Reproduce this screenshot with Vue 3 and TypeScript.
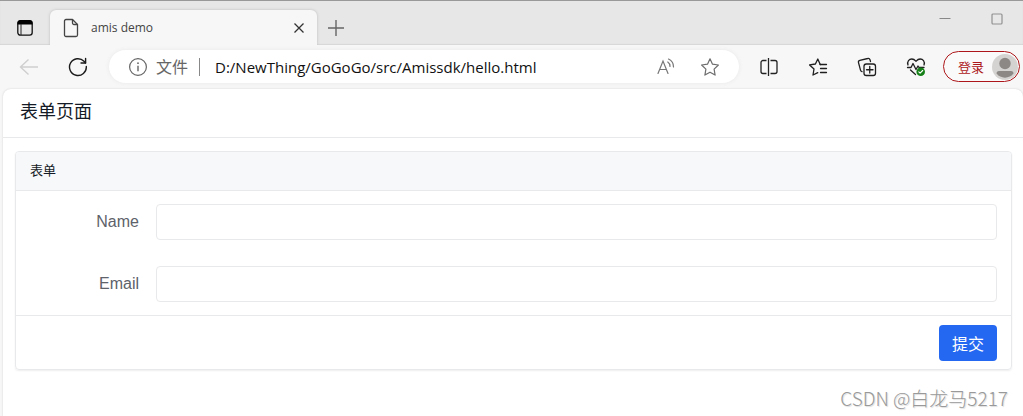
<script setup lang="ts">
import { ref } from 'vue'

const address = ref('D:/NewThing/GoGoGo/src/Amissdk/hello.html')
const fields = [
  { id: 'name', label: 'Name', type: 'text' },
  { id: 'email', label: 'Email', type: 'email' },
]
const values = ref<Record<string, string>>({ name: '', email: '' })
</script>

<template>
  <div class="browser">
    <div class="tabstrip">
      <button class="icon-btn tab-menu" aria-label="Tab actions">
        <svg width="18" height="18" viewBox="0 0 18 18">
          <rect x="1.8" y="1.8" width="14.4" height="14.4" rx="2.6" fill="none" stroke="#111" stroke-width="1.3" />
          <path d="M1.5 5.5V4a3 3 0 0 1 3-3h9a3 3 0 0 1 3 3v1.500z" fill="#000" />
          <path d="M5 5v11" stroke="#222" stroke-width="1" />
        </svg>
      </button>
      <div class="tab">
        <svg width="16" height="20" viewBox="0 0 16 20" fill="none" stroke="#444" stroke-width="1.3" stroke-linejoin="round">
          <path d="M3 1.500h6.500l5 5V17a1.500 1.500 0 0 1-1.500 1.500H3A1.500 1.500 0 0 1 1.500 17V3A1.500 1.500 0 0 1 3 1.500z" />
          <path d="M9.500 1.500V5A1.500 1.500 0 0 0 11 6.500h3.500" />
        </svg>
        <span class="tab-title">amis demo</span>
        <button class="icon-btn tab-close" aria-label="Close tab">
          <svg width="12" height="12" viewBox="0 0 12 12"><path d="M1.500 1.500l9 9M10.500 1.500l-9 9" stroke="#333" stroke-width="1.300" /></svg>
        </button>
      </div>
      <button class="icon-btn new-tab" aria-label="New tab">
        <svg width="18" height="18" viewBox="0 0 18 18"><path d="M9 1v16M1 9h16" stroke="#666" stroke-width="1.400" /></svg>
      </button>
      <div class="window-controls">
        <button class="icon-btn" aria-label="Minimize">
          <svg width="12" height="12" viewBox="0 0 12 12"><path d="M0.500 5.500h11" stroke="#888" /></svg>
        </button>
        <button class="icon-btn" aria-label="Maximize">
          <svg width="12" height="12" viewBox="0 0 12 12"><rect x="1" y="1" width="10" height="10" rx="1" fill="none" stroke="#929292" stroke-width="1.200" /></svg>
        </button>
      </div>
    </div>

    <div class="toolbar">
      <button class="icon-btn" aria-label="Back" disabled>
        <svg width="20" height="20" viewBox="0 0 20 20" fill="none" stroke="#cfcfcf" stroke-width="1.400"><path d="M19 10H1.500M9.500 2.500L1.500 10l8 7.500" /></svg>
      </button>
      <button class="icon-btn reload" aria-label="Reload">
        <svg width="20" height="20" viewBox="0 0 20 20" fill="none" stroke="#1b1b1b" stroke-width="1.400" stroke-linecap="round" stroke-linejoin="round">
          <path d="M18.300 9.500a8.400 8.400 0 1 1-2.300-5.200L17.500 6" /><path d="M17.600 1.500V6H13" />
        </svg>
      </button>
      <div class="address">
        <svg width="20" height="20" viewBox="0 0 20 20" fill="none" stroke="#666" stroke-width="1.200">
          <circle cx="10" cy="10" r="8.400" /><path d="M10 8.700v5.500" stroke-width="1.400" /><circle cx="10" cy="6.200" r="0.900" fill="#666" stroke="none" />
        </svg>
        <label class="scheme" for="url">文件</label>
        <span class="divider"></span>
        <input id="url" v-model="address" class="url" type="text" spellcheck="false" />
        <button class="icon-btn" aria-label="Read aloud">
          <svg width="20" height="20" viewBox="0 0 20 20" fill="none" stroke="#777" stroke-width="1.200" stroke-linecap="round">
            <path d="M2 16.500L7 4l5 12.500M3.700 12.500h6.600" /><path d="M11.800 5a5 5 0 0 1 2.200 4.500M12.500 2a8.500 8.500 0 0 1 5 8" />
          </svg>
        </button>
        <button class="icon-btn favorite" aria-label="Add to favorites">
          <svg width="20" height="20" viewBox="0 0 20 20" fill="none" stroke="#6d6d6d" stroke-width="1.200" stroke-linejoin="round">
            <path d="M10 1.800l2.500 5.400 5.900.8-4.300 4.100 1 6-5.100-2.900-5.100 2.900 1-6L1.600 8l5.900-.8z" />
          </svg>
        </button>
      </div>
      <div class="actions">
        <button class="icon-btn" aria-label="Split screen">
          <svg width="20" height="20" viewBox="0 0 20 20" fill="none" stroke="#222" stroke-width="1.300">
            <path d="M7.500 3.500H4A2 2 0 0 0 2 5.500v9a2 2 0 0 0 2 2h3.500M11.500 3.500H16a2 2 0 0 1 2 2v9a2 2 0 0 1-2 2h-4.500" /><path d="M9.500 1v18" />
          </svg>
        </button>
        <button class="icon-btn" aria-label="Favorites">
          <svg width="20" height="20" viewBox="0 0 20 20" fill="none" stroke="#1f1f1f" stroke-width="1.300" stroke-linecap="round" stroke-linejoin="round">
            <path d="M12.500 7.500L12 7 9.800 2 7.400 7l-5.800.9L6 12l-1 6 4.800-2.300" /><path d="M12 7.500h6.500M12.500 11.500h6M12.500 15.500h6" />
          </svg>
        </button>
        <button class="icon-btn" aria-label="Collections">
          <svg width="20" height="20" viewBox="0 0 20 20" fill="none" stroke="#1f1f1f" stroke-width="1.300" stroke-linecap="round" stroke-linejoin="round">
            <path d="M13.500 4.500l-.5-1.800A1.900 1.900 0 0 0 10.700 1.500L2.800 3.400A1.900 1.900 0 0 0 1.500 5.700l2 7.500a2 2 0 0 0 1.500 1.500" />
            <rect x="7" y="7" width="11.500" height="11.500" rx="2.300" /><path d="M12.750 9.500v6.500M9.500 12.750H16" />
          </svg>
        </button>
        <button class="icon-btn" aria-label="Browser essentials">
          <svg width="20" height="20" viewBox="0 0 20 20" fill="none" stroke="#1f1f1f" stroke-width="1.300" stroke-linecap="round" stroke-linejoin="round">
            <path d="M2 8C.8 4.300 3.200 2 5.800 2 8 2 9 3.200 10 4.300 11 3.200 12 2 14.200 2c2.600 0 5 2.300 3.800 6" />
            <path d="M1.500 10.500H5l2-4 3 6 2-3.500 1 1.500h5M4.500 13l5 4.500" />
            <circle cx="14.700" cy="14.700" r="4.300" fill="#148017" stroke="none" /><path d="M12.800 14.900l1.300 1.200 2.600-2.600" stroke="#fff" stroke-width="1.100" />
          </svg>
        </button>
      </div>
      <button class="login">
        <span>登录</span>
        <svg width="26" height="26" viewBox="0 0 26 26">
          <circle cx="13" cy="13" r="13" fill="#d5d3d1" /><circle cx="13" cy="9.500" r="5.700" fill="#8b8886" />
          <path d="M4.500 19.500q0-2.500 2.500-2.500h12q2.500 0 2.500 2.500a10.700 10.700 0 0 1-17 0z" fill="#8b8886" />
        </svg>
      </button>
    </div>

    <main class="page">
      <header class="page-header"><h1>表单页面</h1></header>
      <form class="panel" @submit.prevent>
        <h2 class="panel-title">表单</h2>
        <div class="panel-body">
          <div v-for="field in fields" :key="field.id" class="field">
            <label :for="field.id">{{ field.label }}</label>
            <input :id="field.id" v-model="values[field.id]" :type="field.type" />
          </div>
        </div>
        <div class="panel-footer"><button class="submit" type="submit">提交</button></div>
      </form>
    </main>
    <div class="watermark">CSDN @白龙马5217</div>
  </div>
</template>

<style>
body { margin: 0; background: #f7f7f7; }
</style>

<style scoped>
* { box-sizing: border-box; }
.browser {
  position: relative;
  display: flex;
  flex-direction: column;
  min-height: 100vh;
  border-top: 1px solid #999;
  background: #f7f7f7;
  font-family: "Open Sans", "Noto Sans CJK SC", sans-serif;
  color: #151b26;
}
button, input { font-family: inherit; }
.icon-btn {
  display: flex;
  flex: none;
  align-items: center;
  justify-content: center;
  padding: 0;
  border: 0;
  background: none;
}
svg { display: block; flex: none; }
.tabstrip {
  display: flex;
  height: 44px;
  padding-top: 9px;
  background: #e7e7e7;
  box-shadow: inset 0 -1px 1px #d6d6d6;
}
.tab-menu { width: 50px; }
.tab {
  display: flex;
  align-items: center;
  width: 267px;
  padding: 0 12px 0 13px;
  border-radius: 6px 6px 0 0;
  background: #f7f7f7;
  box-shadow: 0 0 3px #bbb;
  clip-path: inset(-3px -3px 0 -3px);
}
.tab-title { flex: 1; margin-left: 12px; font-size: 12px; color: #444; }
.new-tab { width: 38px; }
.window-controls { display: flex; align-items: flex-start; gap: 40px; margin-left: auto; padding: 3px 20px 0 0; }
.toolbar { display: flex; align-items: center; height: 44px; padding: 0 3px 1px 19px; }
.reload { margin-left: 29px; }
.address {
  display: flex;
  flex: 1;
  align-items: center;
  height: 33px;
  margin-left: 21px;
  padding: 0 19px 0 19px;
  border-radius: 17px;
  background: #fff;
  box-shadow: 0 0 4px #e8e8e8;
}
.scheme { margin-left: 8px; font-size: 16px; line-height: 24px; color: #666; }
.divider { width: 1px; height: 18px; margin: 0 15px 0 11px; background: #888; }
.url { flex: 1; min-width: 0; padding: 0; border: 0; outline: 0; background: none; font-size: 15px; color: #111; }
.favorite { margin-left: 24px; }
.actions { display: flex; gap: 29px; margin: 0 17px 0 20px; }
.login {
  display: flex;
  align-items: center;
  justify-content: space-between;
  width: 77px;
  height: 31px;
  padding: 0 1px 0 14px;
  border: 1px solid #ad171b;
  border-radius: 16px;
  background: #fafafa;
  font-size: 13px;
  color: #ad171b;
}
.page {
  flex: 1;
  margin-left: 3px;
  border-radius: 8px 8px 0 0;
  background: #fff;
  box-shadow: 0 0 2px #ccc;
  font-family: "Liberation Sans", "Noto Sans CJK SC", sans-serif;
}
.page-header { padding: 10px 17px 12px; border-bottom: 1px solid #e8e9eb; }
h1 { margin: 0; font-size: 18px; line-height: 26px; font-weight: 400; }
.panel {
  margin: 13px 11px 0 12px;
  border: 1px solid #e8e9eb;
  border-radius: 4px;
  box-shadow: 0 1px 2px #eee;
}
.panel-title {
  margin: 0;
  padding: 9px 14px;
  border-bottom: 1px solid #e8e9eb;
  border-radius: 3px 3px 0 0;
  background: #f7f8fa;
  font-size: 13px;
  line-height: 20px;
  font-weight: 400;
}
.panel-body { display: flex; flex-direction: column; gap: 26px; padding: 13px 14px; }
.field { display: flex; align-items: center; gap: 17px; }
.field label { width: 109px; font-size: 16px; text-align: right; color: #5e626a; }
.field input {
  flex: 1;
  min-width: 0;
  height: 36px;
  padding: 0 12px;
  border: 1px solid #e8e9eb;
  border-radius: 4px;
  background: #fff;
  font-size: 16px;
}
.panel-footer { display: flex; justify-content: flex-end; padding: 9px 14px 8px; border-top: 1px solid #e8e9eb; }
.submit { height: 36px; padding: 0 13px; border: 0; border-radius: 4px; background: #2468f2; font-size: 16px; color: #fff; }
.watermark {
  position: absolute;
  right: 15px;
  bottom: 5px;
  font: 300 19px/26px "Noto Sans CJK SC", sans-serif;
  color: #999;
  text-shadow: 1px 1px 1px #ddd;
}
</style>
